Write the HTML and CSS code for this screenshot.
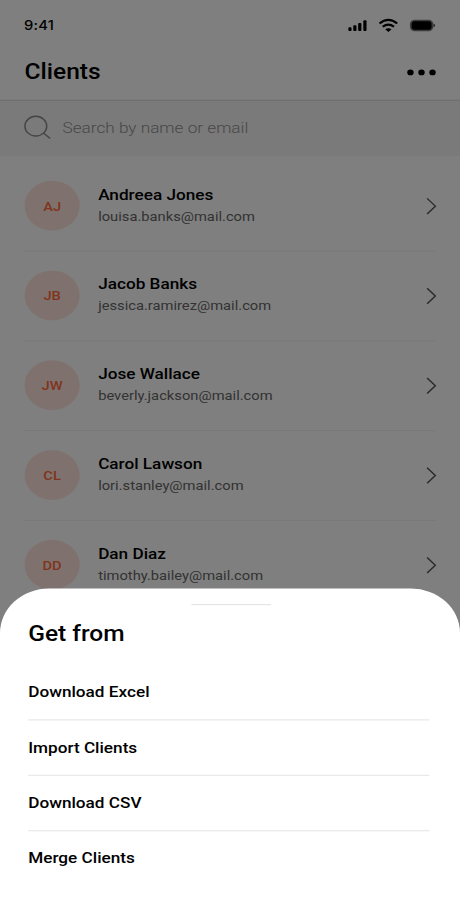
FILE: index.html
```html
<!DOCTYPE html>
<html lang="en">
<head>
<meta charset="utf-8">
<title>Clients</title>
<link rel="stylesheet" href="styles.css">
</head>
<body>
<div class="phone">
  <main class="screen">
    <div class="status">
      <span class="time">9:41</span>
      <svg class="status-icons" viewBox="0 0 72 14" width="72" height="14">
        <rect x="0" y="8.500" width="2.600" height="3.400" rx=".8"/>
        <rect x="4" y="6.700" width="2.600" height="5.200" rx=".8"/>
        <rect x="8" y="4.700" width="2.600" height="7.200" rx=".8"/>
        <rect x="12.200" y="2.300" width="2.600" height="9.600" rx=".8"/>
        <path class="wave" d="M25.400 5.200q7.200-6.400 14.400 0M28 8.100q4.600-3.900 9.200 0"/>
        <path d="M30 10.500q2.600-2.100 5.200 0L32.600 12.900z"/>
        <rect class="cell" x="50.200" y="1.900" width="19" height="10.200" rx="3.800"/>
        <rect x="51.600" y="3.200" width="16.200" height="7.600" rx="2.500"/>
        <path class="tip" d="M69.400 5.300q2.800 1.700 0 3.400z"/>
      </svg>
    </div>
    <header class="header">
      <h1 class="title">Clients</h1>
      <svg class="more" width="24" height="8" viewBox="0 0 24 8"><circle cx="2.600" cy="4.300" r="2.600"/><circle cx="11.600" cy="4.300" r="2.600"/><circle cx="20.600" cy="4.300" r="2.600"/></svg>
    </header>
    <div class="search">
      <svg class="lens" width="22" height="22" viewBox="0 0 22 22"><circle cx="9.200" cy="9.800" r="8.900"/><path d="M15.400 16.100L20.900 21"/></svg>
      <span class="placeholder">Search by name or email</span>
    </div>
    <ul class="clients">
      <li class="client"><span class="avatar">AJ</span><div class="info"><div class="name">Andreea Jones</div><div class="email">louisa.banks@mail.com</div></div><svg class="chevron" width="8" height="16" viewBox="0 0 8 16"><path d="M.2 1L6.900 8L.2 15"/></svg></li>
      <li class="client"><span class="avatar">JB</span><div class="info"><div class="name">Jacob Banks</div><div class="email">jessica.ramirez@mail.com</div></div><svg class="chevron" width="8" height="16" viewBox="0 0 8 16"><path d="M.2 1L6.900 8L.2 15"/></svg></li>
      <li class="client"><span class="avatar">JW</span><div class="info"><div class="name">Jose Wallace</div><div class="email">beverly.jackson@mail.com</div></div><svg class="chevron" width="8" height="16" viewBox="0 0 8 16"><path d="M.2 1L6.900 8L.2 15"/></svg></li>
      <li class="client"><span class="avatar">CL</span><div class="info"><div class="name">Carol Lawson</div><div class="email">lori.stanley@mail.com</div></div><svg class="chevron" width="8" height="16" viewBox="0 0 8 16"><path d="M.2 1L6.900 8L.2 15"/></svg></li>
      <li class="client"><span class="avatar">DD</span><div class="info"><div class="name">Dan Diaz</div><div class="email">timothy.bailey@mail.com</div></div><svg class="chevron" width="8" height="16" viewBox="0 0 8 16"><path d="M.2 1L6.900 8L.2 15"/></svg></li>
    </ul>
  </main>
  <div class="scrim"></div>
  <section class="sheet">
    <div class="handle"></div>
    <h2 class="title">Get from</h2>
    <ul class="actions">
      <li class="action">Download Excel</li>
      <li class="action">Import Clients</li>
      <li class="action">Download CSV</li>
      <li class="action">Merge Clients</li>
    </ul>
  </section>
</div>
</body>
</html>
```
FILE: styles.css
```css
* { box-sizing: border-box; }
html, body { margin: 0; width: 460px; height: 900px; overflow: hidden; }
body { font-family: Roboto, "Liberation Sans", sans-serif; color: #000; background: #fff; }
ul { list-style: none; margin: 0; padding: 0; }
svg { display: block; flex: none; overflow: visible; }

/* 375x812 artboard stretched to the window */
.phone {
  position: relative;
  width: 375px;
  height: 812px;
  overflow: hidden;
  transform-origin: 0 0;
  transform: scale(1.226667, 1.108374);
}
.screen { height: 812px; background: #fff; }
.status { display: flex; justify-content: space-between; align-items: center; height: 44px; padding: 1px 19.500px 0; }
.time { font: 500 12px/16px Inter, sans-serif; letter-spacing: .2px; }
.wave { fill: none; stroke: #000; stroke-width: 1.900; }
.cell { fill: #777; }
.tip { fill: #444; }
.header { display: flex; justify-content: space-between; align-items: center; height: 46px; padding: 0 19.500px 6px 20px; }
.more { margin-top: 2px; }
.title { margin: 0; font-size: 20px; line-height: 24px; font-weight: 500; }
.search { display: flex; align-items: center; gap: 9px; height: 51px; padding: 0 20px 2px; border-top: 1px solid #dcdcdc; background: #f4f4f4; }
.lens { fill: none; stroke: #8a8a8a; stroke-width: 1.200; }
.placeholder { font-size: 14px; line-height: 18px; font-weight: 300; color: #909090; }
.clients { padding: 5px 20px 0; }
.client { display: flex; align-items: center; height: 81px; padding-bottom: 1px; border-bottom: 1px solid #f0f0f0; }
.avatar { width: 45px; height: 45px; margin-right: 15px; border-radius: 50%; background: #ffe5dd; color: #ff6a3a; font-size: 12px; line-height: 46px; font-weight: 500; text-align: center; }
.info { flex: 1; padding-top: .6px; }
.name { font-size: 14px; line-height: 19px; font-weight: 500; }
.email { font-size: 12px; line-height: 21px; color: #666; }
.chevron { margin-right: -.5px; fill: none; stroke: #555; stroke-width: 1.200; }
.scrim { position: absolute; inset: 0; background: rgba(0, 0, 0, .5); }
.sheet { position: absolute; left: 0; right: 0; bottom: 0; height: 281px; padding: 14px 25px 0 23px; border-radius: 40px 40px 0 0; background: #fff; }
.handle { width: 65px; height: 1px; margin: 0 0 13px 133px; background: #e4e4e4; }
.actions { margin-top: 17px; }
.action { height: 50px; padding-top: 15px; border-bottom: 1px solid #e6e6e6; font-size: 14px; line-height: 18px; font-weight: 500; }
.action:last-child { border-bottom: 0; }
```
